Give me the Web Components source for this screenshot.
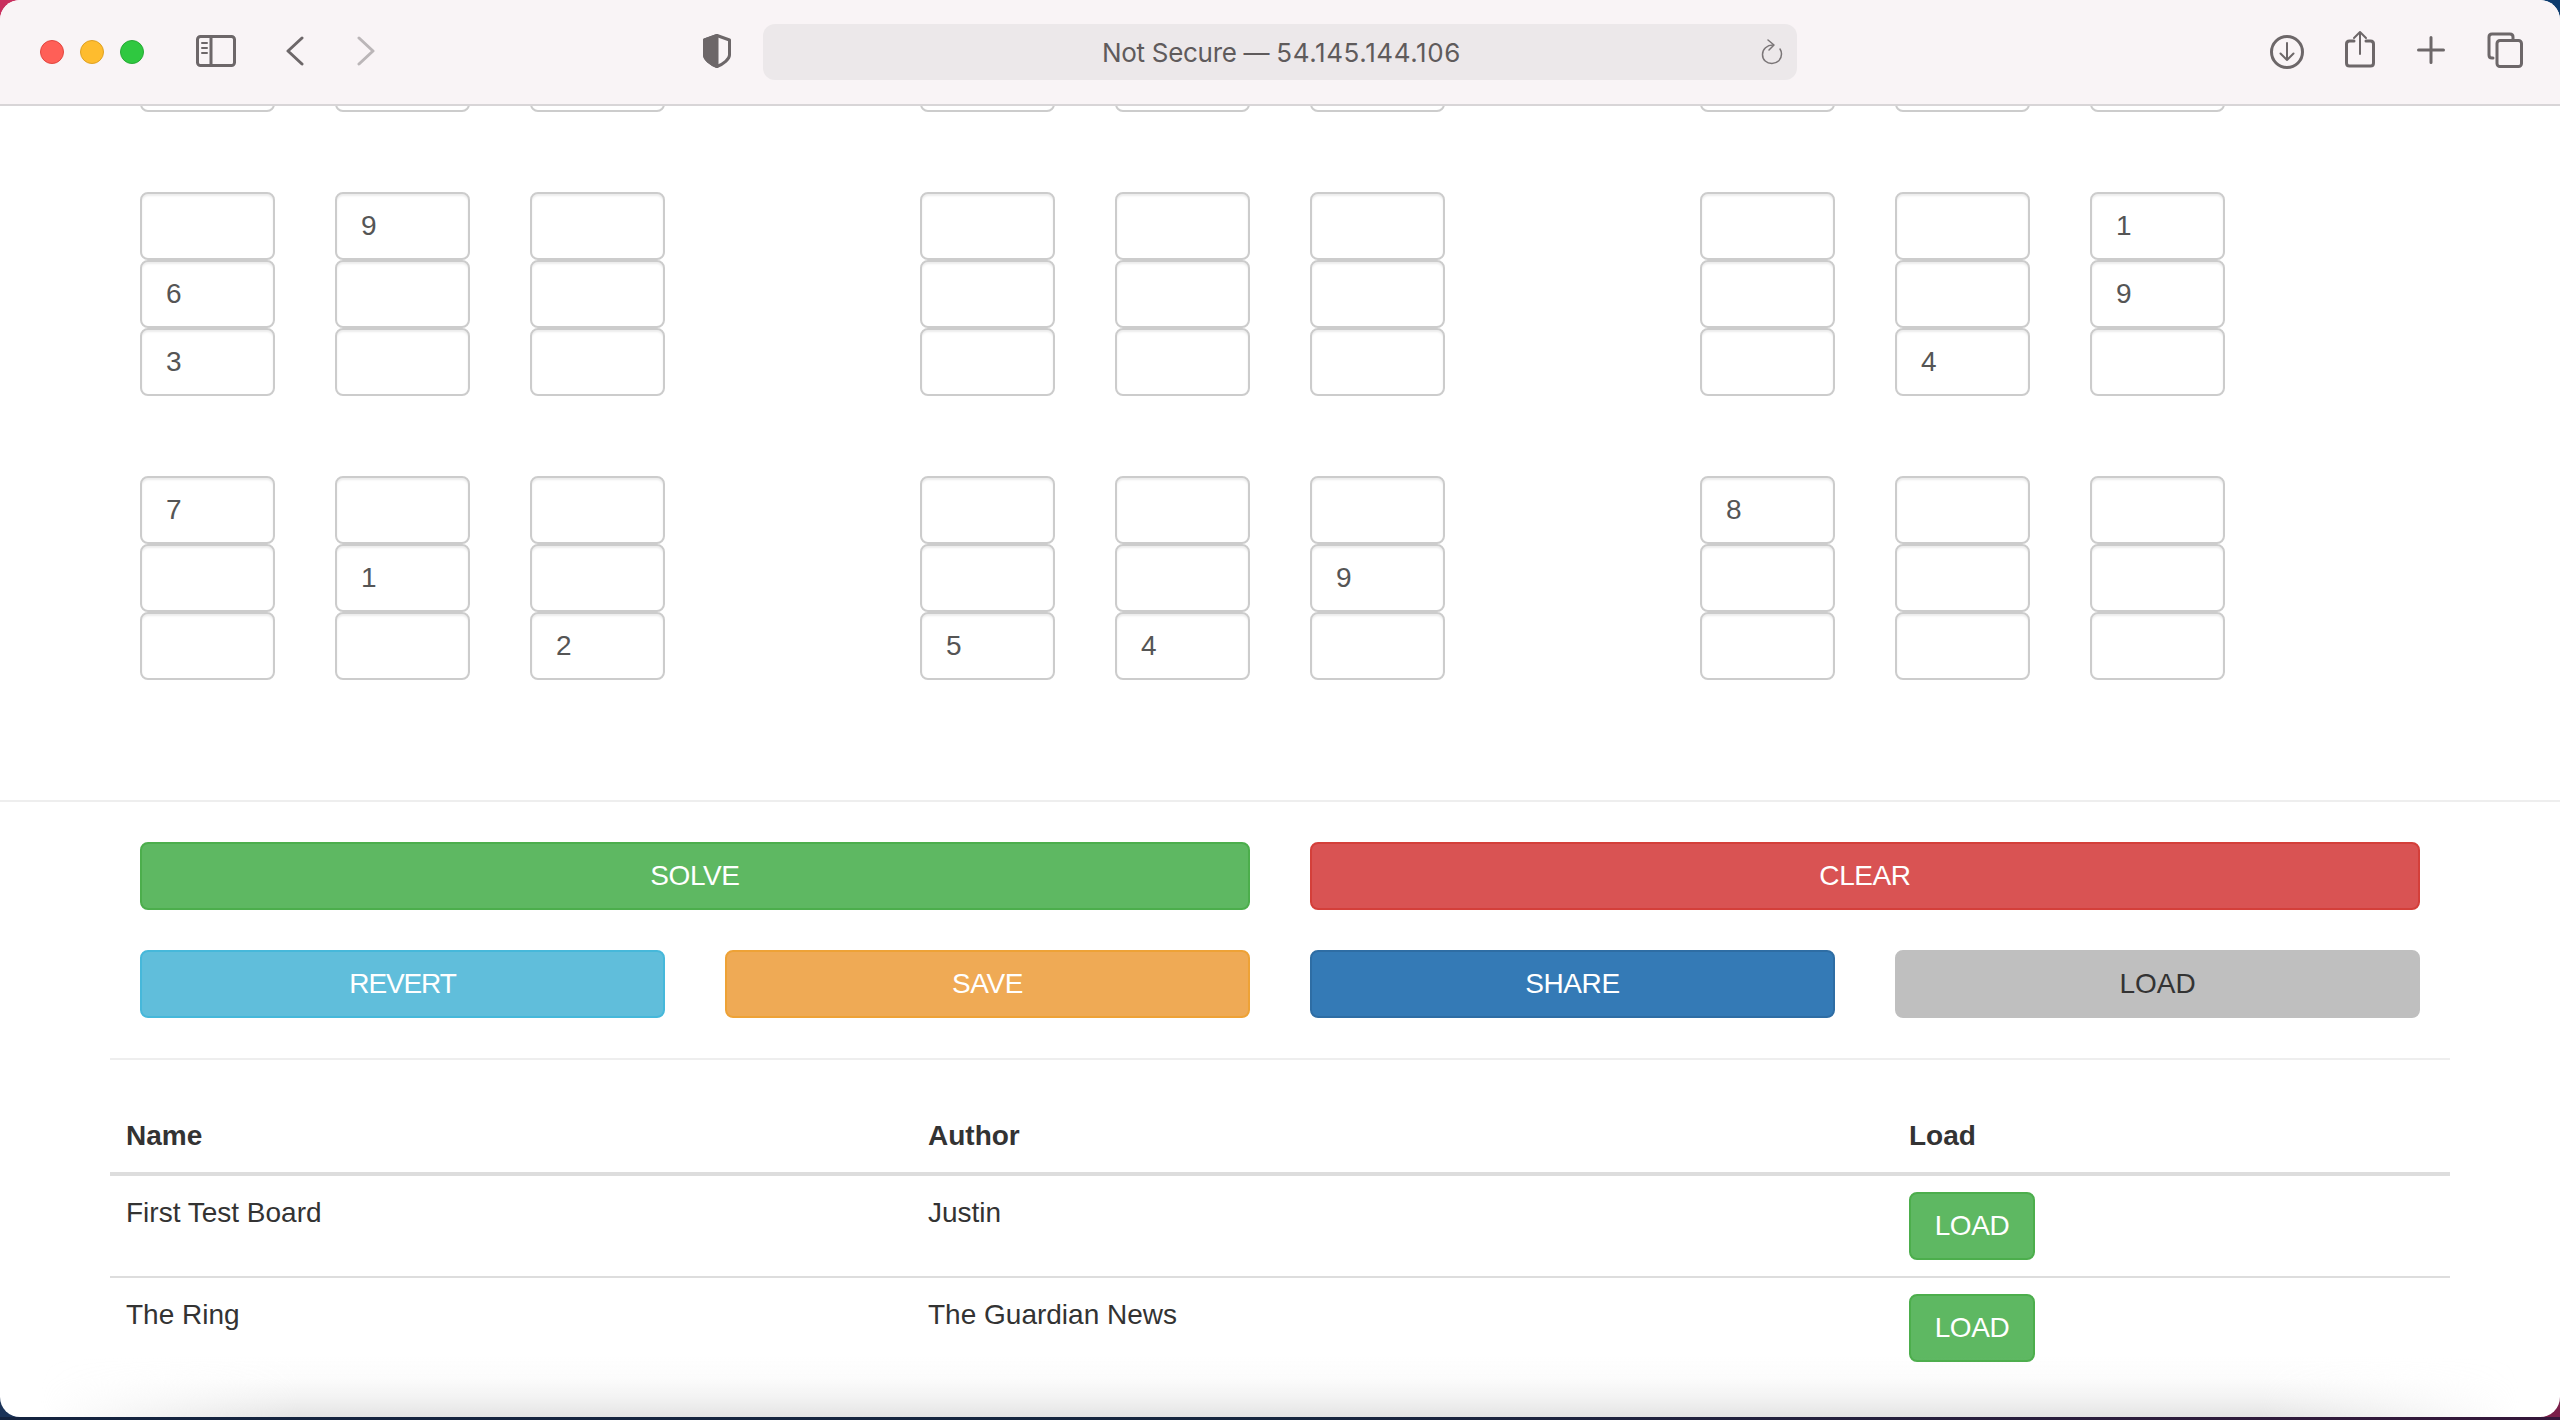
<!doctype html>
<html>
<head>
<meta charset="utf-8">
<title>Sudoku</title>
<style>
  html, body { margin:0; height:100%; }
  body {
    width:2560px; height:1420px; overflow:hidden;
    background:
      linear-gradient(#c92f5e, #c92f5e) left top / 30px 30px no-repeat,
      linear-gradient(#0d3b6e, #0d3b6e) right top / 30px 30px no-repeat,
      linear-gradient(#1b3358, #1b3358) left bottom 3px / 30px 30px no-repeat,
      linear-gradient(#7a1f4a, #7a1f4a) right bottom 3px / 30px 30px no-repeat,
      linear-gradient(90deg, #14233f 0%, #16263f 50%, #35173a 100%);
    font-family: "Liberation Sans", Arial, sans-serif;
  }
</style>
</head>
<body>
<browser-window address="Not Secure — 54.145.144.106">
  <sudoku-board></sudoku-board>
  <action-bar></action-bar>
  <board-table></board-table>
</browser-window>

<script>
// Safari style chrome, page content goes in the slot
class BrowserWindow extends HTMLElement {
  connectedCallback() {
    const address = this.getAttribute('address') ?? '';
    const [label, host] = address.split(' — ');
    this.attachShadow({ mode: 'open' }).innerHTML = `
      <style>
        :host { display:block; width:2560px; height:1417px; }
        .win { position:relative; display:flex; flex-direction:column; height:100%; background:#fff; border-radius:20px; overflow:hidden; }
        .bar {
          flex:none; position:relative; z-index:2; box-sizing:border-box; height:106px;
          display:flex; align-items:center; background:#f9f4f6; border-bottom:2px solid #d8d5d7; color:#6d6769;
          font-family:Inter, "Liberation Sans", sans-serif;
        }
        .lights { display:flex; gap:16px; margin-left:40px; }
        .lights i { width:24px; height:24px; border-radius:50%; box-sizing:border-box; }
        .red { background:#ff5f57; border:1px solid #e2463f; }
        .yel { background:#febc2e; border:1px solid #dfa123; }
        .grn { background:#2fc840; border:1px solid #27aa35; }
        svg { display:block; fill:none; stroke:currentColor; stroke-width:3; stroke-linecap:round; stroke-linejoin:round; }
        .side { margin:-2px 0 0 52px; }
        .back { margin:-2px 0 0 50px; }
        .fwd { margin:-2px 0 0 53px; color:#bbb6b8; }
        .shield { margin:-2px 0 0 328px; }
        .url {
          box-sizing:border-box; padding-left:3px;
          margin-left:32px; width:1034px; height:56px; border-radius:12px; background:#ece8ea; position:relative;
          display:flex; align-items:center; justify-content:center; font-size:26px; color:#5f5b5c; white-space:pre;
        }
        .url .label { letter-spacing:-.3px; }
        .url .host { letter-spacing:.6px; }
        .reload { position:absolute; right:13px; top:15px; color:#7a7577; stroke-width:1.5; }
        .right { display:flex; align-items:center; margin-left:auto; margin-right:37px; gap:42px; }
        .main { flex:1; min-height:0; overflow:hidden; position:relative; }
        .shade {
          position:absolute; left:0; right:0; bottom:0; height:60px; pointer-events:none;
          background:linear-gradient(180deg, rgba(226,226,226,0) 0%, rgba(226,226,226,.1) 35%, rgba(226,226,226,.45) 70%, rgba(226,226,226,.95) 100%);
          -webkit-mask-image:linear-gradient(90deg, transparent 40px, #000 300px, #000 2260px, transparent 2520px);
        }
      </style>
      <div class="win">
        <div class="bar">
          <div class="lights"><i class="red"></i><i class="yel"></i><i class="grn"></i></div>
          <svg class="side" width="40" height="32" viewBox="0 0 40 32"><rect x="1.500" y="1.500" width="37" height="29" rx="3"/><path d="M15 2v28"/><path d="M6 8h5M6 13h5M6 18h5" stroke-width="2"/></svg>
          <svg class="back" width="18" height="30" viewBox="0 0 18 30"><path d="M16 2 2 15l14 13"/></svg>
          <svg class="fwd" width="18" height="30" viewBox="0 0 18 30"><path d="M2 2l14 13L2 28"/></svg>
          <svg class="shield" width="28" height="34" viewBox="0 0 28 34"><path d="M14 1.500 26.500 6v15c0 4-6 9-12.500 11.500C7.500 30 1.500 25 1.500 21V6z"/><path d="M14 1.500 1.500 6v15c0 4 6 9 12.500 11.500z" fill="currentColor"/></svg>
          <div class="url"><span class="label">${label} — </span><span class="host">${host}</span>
            <svg class="reload" width="24" height="26" viewBox="0 0 24 26"><path d="M13 6C7 6 2.500 10 2.500 15.500S6.500 24.500 12 24.500s9.500-4 9.500-9.500c0-2-.5-3.500-1.500-5"/><path d="M8 1l6 5-5 5"/></svg>
          </div>
          <div class="right">
            <svg width="34" height="34" viewBox="0 0 34 34" style="margin-right:-1px"><circle cx="17" cy="17" r="15.500"/><path d="M17 8v17M10.500 18.500 17 25l6.500-6.500" stroke-width="2"/></svg>
            <svg width="30" height="38" viewBox="0 0 30 38" style="margin-top:-6px"><path d="M9 11H4.500Q1.500 11 1.500 14v19q0 3 3 3h21q3 0 3-3V14q0-3-3-3H21"/><path d="M15 2v22M9 8l6-6 6 6" stroke-width="2"/></svg>
            <svg width="28" height="28" viewBox="0 0 28 28" style="margin-top:-4px"><path d="M14 1.500v25M1.500 14h25"/></svg>
            <svg width="36" height="36" viewBox="0 0 36 36" style="margin-top:-4px"><path d="M6 26H5q-3 0-3-3V5q0-3 3-3h18q3 0 3 3v2"/><rect x="10" y="8.500" width="24.500" height="26" rx="3"/></svg>
          </div>
        </div>
        <div class="main"><slot></slot><div class="shade"></div></div>
      </div>
    `;
  }
}
customElements.define('browser-window', BrowserWindow);

class SudokuCell extends HTMLElement {
  connectedCallback() {
    this.attachShadow({ mode: 'open' }).innerHTML = `
      <style>
        :host { display:block; }
        .box {
          box-sizing:border-box; height:68px; padding:0 24px; display:flex; align-items:center;
          background:#fff; border:2px solid #ccc; border-radius:8px; box-shadow:inset 0 2px 2px rgba(0,0,0,.075);
          font-size:28px; color:#555;
        }
      </style>
      <div class="box"><slot></slot></div>
    `;
  }
}
customElements.define('sudoku-cell', SudokuCell);

// values are listed block by block, column by column. '' is an empty cell
const BOARD = [
  [[[], [], []], [[], [], []], [[], [], []]],
  [
    [['', '6', '3'], ['9', '', ''], ['', '', '']],
    [['', '', ''], ['', '', ''], ['', '', '']],
    [['', '', ''], ['', '', '4'], ['1', '9', '']],
  ],
  [
    [['7', '', ''], ['', '1', ''], ['', '', '2']],
    [['', '', '5'], ['', '', '4'], ['', '9', '']],
    [['8', '', ''], ['', '', ''], ['', '', '']],
  ],
];

class SudokuBoard extends HTMLElement {
  connectedCallback() {
    const cell = (v) => `<sudoku-cell>${v ?? ''}</sudoku-cell>`;
    const col = (c) => `<div class="col">${[0, 1, 2].map(i => cell(c[i])).join('')}</div>`;
    const block = (b) => `<div class="block">${b.map(col).join('')}</div>`;
    this.attachShadow({ mode: 'open' }).innerHTML = `
      <style>
        :host { display:block; padding:0 110px; height:694px; border-bottom:2px solid #eee; overflow:hidden; }
        .rows { display:flex; flex-direction:column; gap:80px; margin-top:-198px; }
        .row { display:grid; grid-template-columns:repeat(3, 780px); }
        .block { display:grid; grid-template-columns:repeat(3, 135px); column-gap:60px; padding-left:30px; }
      </style>
      <div class="rows">${BOARD.map(r => `<div class="row">${r.map(block).join('')}</div>`).join('')}</div>
    `;
  }
}
customElements.define('sudoku-board', SudokuBoard);

class ActionButton extends HTMLElement {
  connectedCallback() {
    const kind = this.getAttribute('kind') ?? 'success';
    this.attachShadow({ mode: 'open' }).innerHTML = `
      <style>
        :host { display:block; letter-spacing:-.4px; }
        .btn {
          box-sizing:border-box; height:68px; padding:0 28px; display:flex; align-items:center; justify-content:center;
          border:2px solid; border-radius:8px; font-size:28px; color:#fff; text-transform:uppercase;
        }
        .success { background:#5eb862; border-color:#4cae4c; }
        .danger { background:#d95353; border-color:#d43f3a; }
        .info { background:#60bedb; border-color:#46b8da; }
        .warning { background:#efaa55; border-color:#eea236; }
        .primary { background:#347ab6; border-color:#2e6da4; }
        .grey { background:#bfbfbf; border-color:#bfbfbf; color:#333; }
      </style>
      <div class="btn ${kind}"><slot></slot></div>
    `;
  }
}
customElements.define('action-button', ActionButton);

class ActionBar extends HTMLElement {
  connectedCallback() {
    this.attachShadow({ mode: 'open' }).innerHTML = `
      <style>
        :host { display:block; padding:40px 140px 0; }
        .wide { display:grid; grid-template-columns:repeat(2, 1110px); column-gap:60px; }
        .small { display:grid; grid-template-columns:repeat(4, 525px); column-gap:60px; margin-top:40px; }
      </style>
      <div class="wide">
        <action-button kind="success">Solve</action-button>
        <action-button kind="danger">Clear</action-button>
      </div>
      <div class="small">
        <action-button kind="info" style="letter-spacing:-1.1px">Revert</action-button>
        <action-button kind="warning">Save</action-button>
        <action-button kind="primary">Share</action-button>
        <action-button kind="grey" style="letter-spacing:0">Load</action-button>
      </div>
    `;
  }
}
customElements.define('action-bar', ActionBar);

class BoardTable extends HTMLElement {
  connectedCallback() {
    const rows = [['First Test Board', 'Justin'], ['The Ring', 'The Guardian News']];
    this.attachShadow({ mode: 'open' }).innerHTML = `
      <style>
        :host { display:block; margin:40px 110px 0; border-top:2px solid #eee; padding-top:40px; font-size:28px; line-height:40px; color:#333; }
        .row { display:grid; grid-template-columns:802px 981px 1fr; border-bottom:2px solid #ddd; }
        .row > div { padding:16px; }
        .row > .txt { padding:17px 16px 15px; }
        .head { font-weight:bold; border-bottom-width:4px; }
        .load { display:inline-block; width:126px; }
        .row:last-child { border-bottom:none; }
      </style>
      <div class="row head"><div>Name</div><div>Author</div><div>Load</div></div>
      ${rows.map(r => `
        <div class="row">
          <div class="txt">${r[0]}</div><div class="txt">${r[1]}</div>
          <div><action-button class="load" kind="success">Load</action-button></div>
        </div>`).join('')}
    `;
  }
}
customElements.define('board-table', BoardTable);
</script>
</body>
</html>
